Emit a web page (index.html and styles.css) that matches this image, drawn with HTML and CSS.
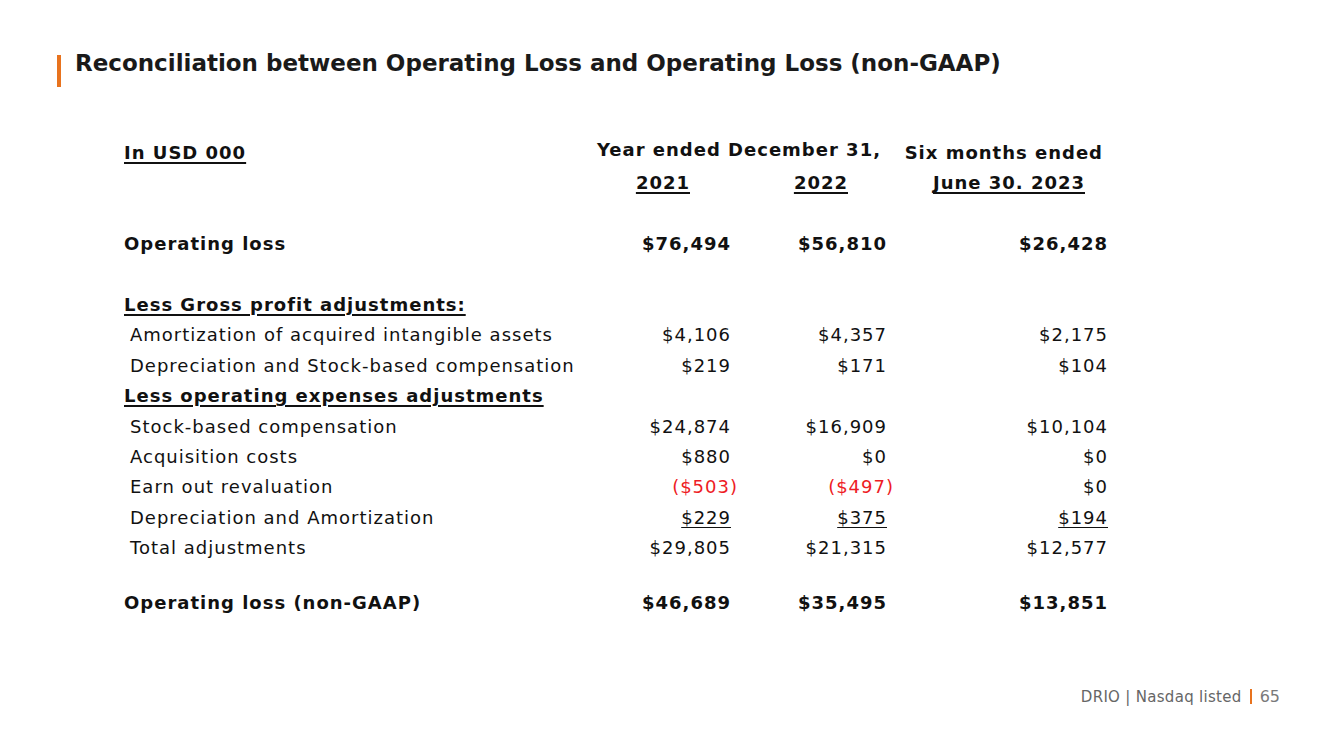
FILE: index.html
```html
<!DOCTYPE html>
<html lang="en">
<head>
<meta charset="utf-8">
<title>Reconciliation between Operating Loss and Operating Loss (non-GAAP)</title>
<link rel="stylesheet" href="styles.css">
</head>
<body>
<div class="slide">
  <header class="title-row">
    <span class="title-bar"></span>
    <h1 class="title">Reconciliation between Operating Loss and Operating Loss (non-GAAP)</h1>
  </header>

  <div class="table">
    <div class="cell label bold ul">In USD 000</div>
    <div class="cell hdr-year bold">Year ended December 31,</div>
    <div class="cell hdr-six bold">Six months ended</div>

    <div class="cell label"></div>
    <div class="cell num bold ul h2021">2021</div>
    <div class="cell num bold ul h2022">2022</div>
    <div class="cell num bold ul h2023">June 30. 2023</div>

    <div class="cell spacer"></div>

    <div class="cell label bold">Operating loss</div>
    <div class="cell num bold">$76,494</div>
    <div class="cell num bold">$56,810</div>
    <div class="cell num bold">$26,428</div>

    <div class="cell spacer"></div>

    <div class="cell label bold ul">Less Gross profit adjustments:</div>
    <div class="cell num"></div><div class="cell num"></div><div class="cell num"></div>

    <div class="cell label sub">Amortization of acquired intangible assets</div>
    <div class="cell num">$4,106</div>
    <div class="cell num">$4,357</div>
    <div class="cell num">$2,175</div>

    <div class="cell label sub">Depreciation and Stock-based compensation</div>
    <div class="cell num">$219</div>
    <div class="cell num">$171</div>
    <div class="cell num">$104</div>

    <div class="cell label bold ul">Less operating expenses adjustments</div>
    <div class="cell num"></div><div class="cell num"></div><div class="cell num"></div>

    <div class="cell label sub">Stock-based compensation</div>
    <div class="cell num">$24,874</div>
    <div class="cell num">$16,909</div>
    <div class="cell num">$10,104</div>

    <div class="cell label sub">Acquisition costs</div>
    <div class="cell num">$880</div>
    <div class="cell num">$0</div>
    <div class="cell num">$0</div>

    <div class="cell label sub">Earn out revaluation</div>
    <div class="cell num"><span class="neg">($503)</span></div>
    <div class="cell num"><span class="neg">($497)</span></div>
    <div class="cell num">$0</div>

    <div class="cell label sub">Depreciation and Amortization</div>
    <div class="cell num"><span class="ul-thin">$229</span></div>
    <div class="cell num"><span class="ul-thin">$375</span></div>
    <div class="cell num"><span class="ul-thin">$194</span></div>

    <div class="cell label sub">Total adjustments</div>
    <div class="cell num">$29,805</div>
    <div class="cell num">$21,315</div>
    <div class="cell num">$12,577</div>

    <div class="cell spacer small"></div>

    <div class="cell label bold">Operating loss (non-GAAP)</div>
    <div class="cell num bold">$46,689</div>
    <div class="cell num bold">$35,495</div>
    <div class="cell num bold">$13,851</div>
  </div>

  <footer class="footer">
    <span class="footer-text">DRIO | Nasdaq listed</span>
    <span class="footer-bar"></span>
    <span class="footer-page">65</span>
  </footer>
</div>
</body>
</html>
```
FILE: styles.css
```css
* { box-sizing: border-box; }
html, body {
  margin: 0;
  padding: 0;
  background: #ffffff;
}
body {
  font-family: "DejaVu Sans", "Open Sans", sans-serif;
  color: #111111;
}
.slide {
  width: 1333px;
  height: 749px;
  position: relative;
  overflow: hidden;
}
.title-row {
  display: flex;
  align-items: flex-start;
  padding: 48px 0 0 57px;
}
.title-bar {
  width: 4px;
  height: 32px;
  margin-top: 7px;
  background: #e8731e;
  flex: none;
}
.title {
  margin: 0 0 0 14px;
  font-size: 23px;
  font-weight: bold;
  line-height: 30px;
  color: #1a1a1a;
}
.table {
  display: grid;
  grid-template-columns: 440px 167px 156px 221px;
  margin: 51px 0 0 124px;
  font-size: 18px;
  letter-spacing: 1px;
  line-height: 30.4px;
}
.cell {
  white-space: nowrap;
  min-height: 30.4px;
}
.bold { font-weight: bold; }
.ul {
  text-decoration: underline;
  text-decoration-thickness: 2px;
  text-underline-offset: 3px;
}
.ul-thin {
  text-decoration: underline;
  text-decoration-thickness: 1px;
  text-underline-offset: 3px;
}
.num { text-align: right; }
.num > span { display: inline-block; }
.sub { padding-left: 6px; }
.spacer {
  grid-column: 1 / -1;
  height: 30.4px;
}
.spacer.small {
  min-height: 0;
  height: 24px;
}
.hdr-year {
  grid-column: 2 / 4;
  text-align: right;
  padding-right: 6px;
  margin-top: -3px;
}
.hdr-six {
  text-align: right;
  padding-right: 5px;
}
.h2021 { padding-right: 41px; }
.h2022 { padding-right: 39px; }
.h2023 { padding-right: 23px; }
.neg {
  color: #ee1c25;
  margin-right: -7px;
}
.footer {
  position: absolute;
  right: 53px;
  bottom: 43px;
  display: flex;
  align-items: center;
  gap: 8px;
  color: #666666;
}
.footer-text {
  font-size: 15px;
  letter-spacing: 0.3px;
}
.footer-bar {
  width: 2px;
  height: 15px;
  background: #e8731e;
}
.footer-page {
  font-size: 16px;
  color: #7a7a7a;
}
```
